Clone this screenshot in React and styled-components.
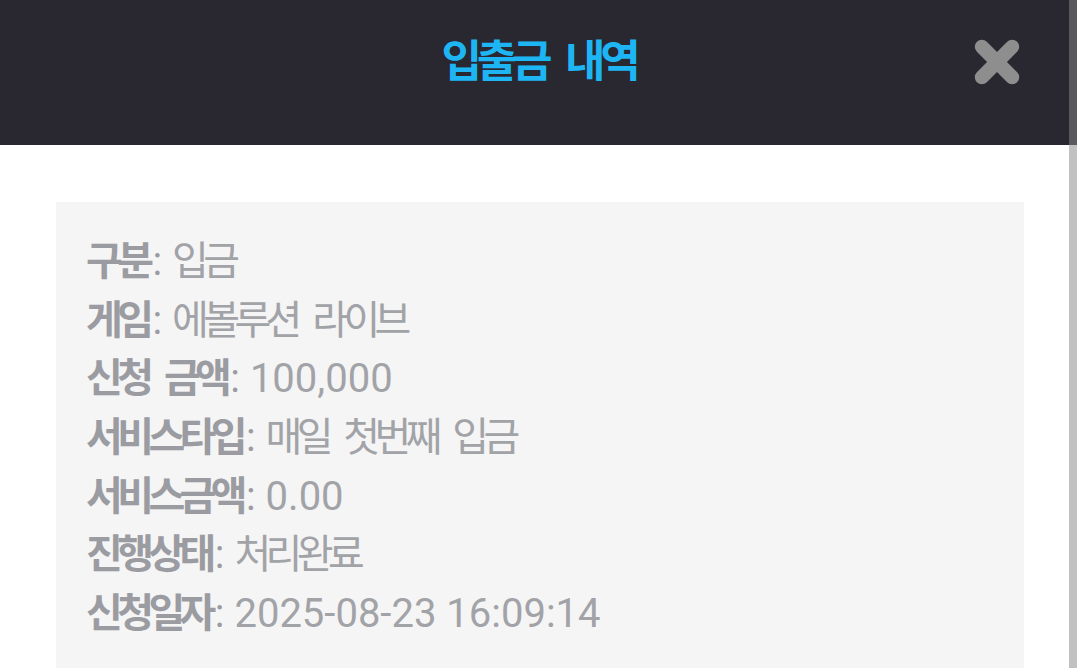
import React from 'react';
import styled, { createGlobalStyle } from 'styled-components';

const GlobalStyle = createGlobalStyle`
  html, body {
    margin: 0;
    padding: 0;
    height: 100%;
    overflow: hidden;
    background: #ffffff;
  }
  body {
    font-family: Roboto, "Noto Sans CJK KR", sans-serif;
  }
`

const Page = styled.div`
  position: relative;
  width: 100%;
  height: 100vh;
  overflow: hidden;
`

const Header = styled.header`
  height: 145px;
  background-color: #29272f;
  display: grid;
  grid-template-columns: 1fr auto 1fr;
  align-items: center;
`

const Title = styled.h1`
  grid-column: 2;
  margin: 0 0 30px;
  font-family: "Noto Sans CJK KR", sans-serif;
  font-size: 44px;
  font-weight: 700;
  letter-spacing: -0.12em;
  word-spacing: 0.3em;
  color: #1db5f3;
  line-height: 1;
`

const CloseButton = styled.button`
  grid-column: 3;
  justify-self: end;
  margin-right: 54px;
  margin-bottom: 22px;
  width: 52px;
  height: 52px;
  padding: 0;
  border: 0;
  background: transparent;
  display: flex;
  align-items: center;
  justify-content: center;
  cursor: pointer;
`

const Body = styled.main`
  padding: 57px 53px 0 56px;
`

const Card = styled.section`
  background-color: #f5f5f6;
  padding: 27px 30px 60px;
  min-height: 600px;
`

const Row = styled.p`
  margin: 0;
  height: 58.67px;
  font-size: 40px;
  line-height: 58.67px;
  color: #a2a3a7;
  white-space: nowrap;
`

const Label = styled.span`
  font-weight: 700;
  color: #9b9ca1;
`

const Colon = styled.span`
  font-weight: 400;
  color: #9b9ca1;
`

const Ko = styled.span`
  font-family: "Noto Sans CJK KR", sans-serif;
  letter-spacing: -0.14em;
  word-spacing: 0.3em;
  margin-right: 0.1em;
`

const ScrollRail = styled.div`
  position: absolute;
  top: 0;
  right: 0;
  width: 8px;
  height: 100%;
  background-color: rgba(136, 136, 136, 0.52);
`

const rows = [
  { label: '구분', value: [['ko', '입금']] },
  { label: '게임', value: [['ko', '에볼루션 라이브']] },
  { label: '신청 금액', value: [['num', '100,000']] },
  { label: '서비스타입', value: [['ko', '매일 첫번째 입금']] },
  { label: '서비스금액', value: [['num', '0.00']] },
  { label: '진행상태', value: [['ko', '처리완료']] },
  { label: '신청일자', value: [['num', '2025-08-23 16:09:14']] },
]

function CloseIcon() {
  return (
    <svg width="52" height="52" viewBox="0 0 48 48">
      <path
        d="M10 10 L38 38 M38 10 L10 38"
        stroke="#8e8e8e"
        strokeWidth="13"
        strokeLinecap="round"
        fill="none"
      />
    </svg>
  )
}

export default function App() {
  return (
    <>
      <GlobalStyle />
      <Page>
        <Header>
          <Title>입출금 내역</Title>
          <CloseButton aria-label="닫기">
            <CloseIcon />
          </CloseButton>
        </Header>
        <Body>
          <Card>
            {rows.map(row => (
              <Row key={row.label}>
                <Label><Ko>{row.label}</Ko></Label>
                <Colon>: </Colon>
                {row.value.map(([kind, text], i) =>
                  kind === 'ko' ? <Ko key={i}>{text}</Ko> : <span key={i}>{text}</span>
                )}
              </Row>
            ))}
          </Card>
        </Body>
        <ScrollRail />
      </Page>
    </>
  )
}
